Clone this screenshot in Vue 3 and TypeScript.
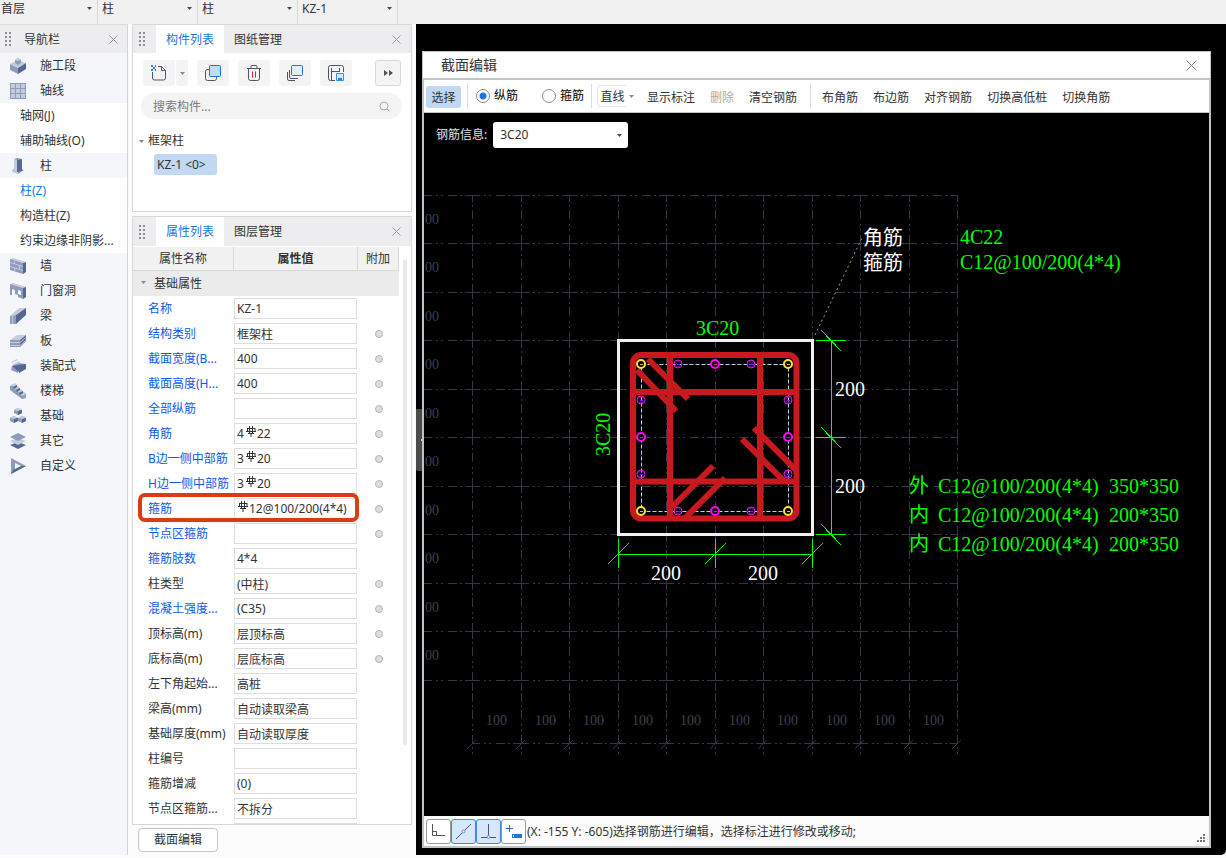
<script setup lang="ts">
import { ref } from 'vue'

type Shape = [points: string, fill: string]
interface NavItem { label: string; icon?: Shape[]; active?: boolean }
interface Prop {
  id: string
  label: string
  value: string
  key?: boolean
  extra?: boolean
  rebar?: boolean
  count?: string
  marked?: boolean
}

const L = '#c3ccdc'
const M = '#8e9cba'
const D = '#566890'

const nav: NavItem[] = [
  { label: '施工段', icon: [['0,6 8,2 16,5 8,10', L], ['0,6 8,10 8,16 0,12', M], ['8,10 16,5 16,11 8,16', D], ['5,2 8,0 11,2 11,5 8,7 5,5', M], ['5,2 8,0 11,2 8,3', L]] },
  { label: '轴线', icon: [['0,0 16,0 16,16 0,16', M], ['1,1 5,1 5,5 1,5', L], ['6,1 10,1 10,5 6,5', L], ['11,1 15,1 15,5 11,5', L], ['1,6 5,6 5,10 1,10', L], ['6,6 10,6 10,10 6,10', L], ['11,6 15,6 15,10 11,10', L], ['1,11 5,11 5,15 1,15', L], ['6,11 10,11 10,15 6,15', L], ['11,11 15,11 15,15 11,15', L]] },
  { label: '轴网(J)' },
  { label: '辅助轴线(O)' },
  { label: '柱', icon: [['2,12 8,10 14,12 8,16', M], ['2,12 8,14 8,16 2,14', L], ['4,1 8,0 8,14 4,13', L], ['7,1 12,1 12,13 7,14', D], ['4,1 7,0 12,1 8,2', M]] },
  { label: '柱(Z)', active: true },
  { label: '构造柱(Z)' },
  { label: '约束边缘非阴影...' },
  { label: '墙', icon: [['0,1 3,0 16,4 13,5', L], ['0,1 13,5 13,16 0,12', M], ['13,5 16,4 16,14 13,16', D], ['0,4 13,8 13,9 0,5', L], ['0,8 13,12 13,13 0,9', L], ['4,3 5,3 5,6 4,6', L], ['9,8 10,8 10,11 9,11', L], ['4,10 5,10 5,13 4,13', L]] },
  { label: '门窗洞', icon: [['0,1 3,0 16,4 13,5', L], ['0,1 13,5 13,16 8,14 8,12 5,11 5,7 2,6 2,12 0,12', M], ['13,5 16,4 16,14 13,16', D], ['8,7 11,8 11,12 8,11', '#f4f6f9']] },
  { label: '梁', icon: [['0,8 9,0 16,0 6,7', L], ['0,8 6,7 6,16 0,16', M], ['6,7 16,0 16,7 6,16', D], ['2,8 3,8 3,16 2,16', L]] },
  { label: '板', icon: [['0,7 7,2 16,2 10,7', L], ['0,7 10,7 10,14 0,14', M], ['10,7 16,2 16,8 10,14', D], ['0,9 10,9 16,4 16,5 10,10 0,10', L], ['0,12 10,12 16,7 16,8 10,13 0,13', L]] },
  { label: '装配式', icon: [['1,4 7,1 8,2 2,5', L], ['2,7 9,3 10,4 3,8', L], ['2,8 9,5 16,6 9,11', M], ['2,8 9,11 8,15 1,12', M], ['9,11 16,6 16,11 9,15', D], ['2,8 16,6 14,11 9,14', D]] },
  { label: '楼梯', icon: [['0,3 4,1 16,11 16,15 12,16 0,7', M], ['1,2 5,0 7,2 3,4', L], ['4,5 8,3 10,5 6,7', L], ['7,8 11,6 13,8 9,10', L], ['10,11 14,9 16,11 12,13', L], ['3,4 7,2 7,4 4,6', D], ['6,7 10,5 10,7 7,9', D], ['9,10 13,8 13,10 10,12', D]] },
  { label: '基础', icon: [['8,0 12,2 12,5 8,7 4,5 4,2', M], ['8,0 12,2 8,3 4,2', L], ['8,3 12,2 12,5 8,7', D], ['4,8 8,10 8,13 4,15 0,13 0,10', M], ['4,8 8,10 4,11 0,10', L], ['4,11 8,10 8,13 4,15', D], ['12,8 16,10 16,13 12,15 8,13 8,10', M], ['12,8 16,10 12,11 8,10', L], ['12,11 16,10 16,13 12,15', D]] },
  { label: '其它', icon: [['0,12 8,9 16,12 8,16', D], ['0,8 8,5 16,8 8,12', L], ['0,4 8,0 16,4 8,8', M]] },
  { label: '自定义', icon: [['1,0 16,8 1,16', M], ['1,16 4,11 11,8 16,8', D], ['5,5 11,8 5,11', '#f4f6f9']] }
]

const props: Prop[] = [
  { id: 'name', label: '名称', value: 'KZ-1', key: true },
  { id: 'kind', label: '结构类别', value: '框架柱', key: true, extra: true },
  { id: 'width', label: '截面宽度(B...', value: '400', key: true, extra: true },
  { id: 'height', label: '截面高度(H...', value: '400', key: true, extra: true },
  { id: 'all', label: '全部纵筋', value: '', key: true, extra: true },
  { id: 'corner', label: '角筋', value: '22', key: true, extra: true, rebar: true, count: '4' },
  { id: 'bside', label: 'B边一侧中部筋', value: '20', key: true, extra: true, rebar: true, count: '3' },
  { id: 'hside', label: 'H边一侧中部筋', value: '20', key: true, extra: true, rebar: true, count: '3' },
  { id: 'stirrup', label: '箍筋', value: '12@100/200(4*4)', key: true, extra: true, rebar: true, marked: true },
  { id: 'node', label: '节点区箍筋', value: '', key: true, extra: true },
  { id: 'legs', label: '箍筋肢数', value: '4*4', key: true },
  { id: 'type', label: '柱类型', value: '(中柱)', extra: true },
  { id: 'grade', label: '混凝土强度...', value: '(C35)', key: true, extra: true },
  { id: 'top', label: '顶标高(m)', value: '层顶标高', extra: true },
  { id: 'bottom', label: '底标高(m)', value: '层底标高', extra: true },
  { id: 'lower', label: '左下角起始...', value: '高桩' },
  { id: 'beam', label: '梁高(mm)', value: '自动读取梁高' },
  { id: 'base', label: '基础厚度(mm)', value: '自动读取厚度' },
  { id: 'no', label: '柱编号', value: '' },
  { id: 'delta', label: '箍筋增减', value: '(0)' },
  { id: 'split', label: '节点区箍筋...', value: '不拆分' },
  { id: 'more', label: '', value: '' }
]

const selectors = ['首层', '柱', '柱', 'KZ-1']
const barMode = ref('long')

// Axis positions of the drawing grid
const gx = [472, 521, 569, 618, 666, 715, 763, 812, 860, 909, 957]
const gy = [195, 243, 292, 340, 389, 437, 486, 534, 583, 631, 680]

const rows = gy
  .map(y => 'M424 ' + (y + 0.5) + 'H472' + gx.slice(0, -1).map((x, i) => `M${x} ${y + 0.5}H${gx[i + 1]}`).join(''))
  .join('')
const cols = gx
  .map(x => `M${x + 0.5} 743V680` + gy.slice(1).map((y, i) => `M${x + 0.5} ${y}V${gy[i]}`).join(''))
  .join('')
const base = gx.slice(0, -1).map((x, i) => `M${x} 743.5H${gx[i + 1]}`).join('')
const tails = gx.map(x => `M${x + 0.5} 747V754`).join('')
const ticks = gx.map(x => `M${x - 5} 749L${x + 4} 740`).join('')

const corners = [[641, 364], [788, 364], [641, 511], [788, 511]]
const middles = [[715, 364], [715, 511], [641, 437], [788, 437]]
const sides = [[678, 364], [751, 364], [641, 400], [641, 474], [788, 400], [788, 474], [678, 511], [751, 511]]

const stirrups = [
  { y: 493, place: '外', size: '350*350' },
  { y: 522, place: '内', size: '200*350' },
  { y: 551, place: '内', size: '200*350' }
]
</script>

<template>
  <div class="app">
    <header class="topbar">
      <div v-for="(s, i) in selectors" :key="i" class="pick">
        <select :aria-label="'选择 ' + (i + 1)"><option>{{ s }}</option></select>
        <svg class="caret" width="5" height="3"><path d="M0 0h5L2.500 3z" /></svg>
      </div>
    </header>

    <div class="main">
      <nav class="nav">
        <div class="head">
          <svg class="grip" width="8" height="14"><path d="M0 0h2v2H0zM4 0h2v2H4zM0 4h2v2H0zM4 4h2v2H4zM0 8h2v2H0zM4 8h2v2H4zM0 12h2v2H0zM4 12h2v2H4z" /></svg>
          <span class="navtitle">导航栏</span>
          <button class="close" aria-label="关闭"><svg width="9" height="9"><path d="M.5.5l8 8M8.500.5l-8 8" /></svg></button>
        </div>
        <a v-for="n in nav" :key="n.label" href="#" class="navrow" :class="{ sub: !n.icon, on: n.active }">
          <svg v-if="n.icon" width="16" height="16"><polygon v-for="(p, i) in n.icon" :key="i" :points="p[0]" :fill="p[1]" /></svg>
          <span>{{ n.label }}</span>
        </a>
      </nav>

      <div class="side">
        <section class="panel list">
          <div class="head">
            <svg class="grip" width="8" height="14"><path d="M0 0h2v2H0zM4 0h2v2H4zM0 4h2v2H0zM4 4h2v2H4zM0 8h2v2H0zM4 8h2v2H4zM0 12h2v2H0zM4 12h2v2H4z" /></svg>
            <button class="tab on">构件列表</button>
            <button class="tab">图纸管理</button>
            <button class="close" aria-label="关闭"><svg width="9" height="9"><path d="M.5.5l8 8M8.500.5l-8 8" /></svg></button>
          </div>
          <div class="tools">
            <div class="split">
              <button class="tool" aria-label="新建">
                <svg width="18" height="18" fill="none" stroke="#4d5566"><path d="M2.500 8v6q0 2 2 2h9q2 0 2-2V6.500l-4-4H8M11.500 2.500v4h4" /><path d="M1 2h2M5 2h1M3 4h2M1 6h2M5 6h1" stroke="#2f80e4" stroke-width="2" /></svg>
              </button>
              <button class="tool drop" aria-label="新建选项"><svg class="caret soft" width="5" height="3"><path d="M0 0h5L2.500 3z" /></svg></button>
            </div>
            <button class="tool" aria-label="复制">
              <svg width="16" height="16" fill="none"><rect x=".5" y="4.500" width="11" height="11" rx="2" stroke="#4d5566" /><rect x="4.500" y=".5" width="11" height="11" rx="1" fill="#c8daf3" stroke="#1f74e0" /></svg>
            </button>
            <button class="tool" aria-label="删除">
              <svg width="16" height="16" fill="none" stroke="#4d5566"><path d="M1 3.500h14M5 3.500V1.500q0-1 1-1h4q1 0 1 1v2M2.500 3.500v10q0 2 2 2h7q2 0 2-2v-10" /><path d="M6.500 6.500v6M9.500 6.500v6" stroke="#e02a2a" /></svg>
            </button>
            <button class="tool" aria-label="层间复制">
              <svg width="16" height="16" fill="none" stroke="#4d5566"><path d="M.5 7v7q0 1.500 1.500 1.500h6M2.500 5v7q0 1.500 1.500 1.500h7" /><rect x="4.500" y=".5" width="11" height="10" rx="1" fill="#e3eefb" stroke="#1f74e0" /></svg>
            </button>
            <button class="tool" aria-label="存档">
              <svg width="16" height="16" fill="none" stroke="#4d5566"><path d="M7 15.500H2.500q-2 0-2-2v-11q0-2 2-2h11q2 0 2 2V7M3.500 3v12M3.500 6.500h8M11.500 3v4" /><path d="M8.500 8.500h7v7h-7z" fill="#d7e6fa" stroke="#3c8ae8" /><path d="M10 13h4v2h-4z" fill="#2f80e4" stroke="none" /></svg>
            </button>
            <button class="tool more" aria-label="更多"><svg width="9" height="6"><path d="M0 0l4 3-4 3zM5 0l4 3-4 3z" fill="#4b4f58" /></svg></button>
          </div>
          <div class="search">
            <input type="search" placeholder="搜索构件..." aria-label="搜索构件">
            <svg width="11" height="11" fill="none" stroke="#a9a9ab"><circle cx="5" cy="5" r="4" /><path d="M8 8l2.500 2.500" /></svg>
          </div>
          <div class="tree">
            <div class="branch"><svg class="caret soft" width="5" height="3"><path d="M0 0h5L2.500 3z" /></svg>框架柱</div>
            <button class="leaf">KZ-1 &lt;0&gt;</button>
          </div>
        </section>

        <section class="panel attrs">
          <div class="head">
            <svg class="grip" width="8" height="14"><path d="M0 0h2v2H0zM4 0h2v2H4zM0 4h2v2H0zM4 4h2v2H4zM0 8h2v2H0zM4 8h2v2H4zM0 12h2v2H0zM4 12h2v2H4z" /></svg>
            <button class="tab on">属性列表</button>
            <button class="tab">图层管理</button>
            <button class="close" aria-label="关闭"><svg width="9" height="9"><path d="M.5.5l8 8M8.500.5l-8 8" /></svg></button>
          </div>
          <div class="scroller">
            <div class="tablebox">
              <table>
                <colgroup><col class="c1"><col><col class="c3"></colgroup>
                <thead><tr><th>属性名称</th><th class="strong">属性值</th><th>附加</th></tr></thead>
                <tbody>
                  <tr class="group"><td colspan="3"><svg class="caret soft" width="5" height="3"><path d="M0 0h5L2.500 3z" /></svg>基础属性</td></tr>
                  <tr v-for="p in props" :key="p.id">
                    <td class="name" :class="{ key: p.key, marked: p.marked }"><label :for="p.id">{{ p.label }}</label></td>
                    <td>
                      <div class="field">
                        <input v-if="p.count" class="count" :value="p.count" :aria-label="p.label + '根数'">
                        <svg v-if="p.rebar" class="rebar" width="10" height="11" fill="none" stroke="#333"><path d="M3.500 0v8M6.500 0v8M1.500 2v4M9 2v4M1.500 2.500h7.500M0 5.500h10M2 7.500h6M5 8v3" /></svg>
                        <input :id="p.id" :value="p.value" :aria-label="p.label || '更多'">
                      </div>
                    </td>
                    <td class="extra"><input v-if="p.extra" type="checkbox" :aria-label="p.label + '附加'"></td>
                  </tr>
                </tbody>
              </table>
            </div>
            <div class="bar"></div>
          </div>
        </section>
        <button class="edit">截面编辑</button>
      </div>

      <main class="stage">
        <div class="handle"></div>
        <section class="dialog">
          <div class="title">
            <h1>截面编辑</h1>
            <button class="close" aria-label="关闭"><svg width="11" height="11"><path d="M.5.5l10 10M10.500.5l-10 10" /></svg></button>
          </div>
          <div class="body">
            <div class="toolbar">
              <button class="choose">选择</button>
              <i class="sep"></i>
              <label class="radio first"><input v-model="barMode" type="radio" name="bar" value="long">纵筋</label>
              <label class="radio"><input v-model="barMode" type="radio" name="bar" value="stirrup">箍筋</label>
              <i class="sep"></i>
              <button class="line">直线</button>
              <button class="linedrop" aria-label="线型"><svg class="caret soft" width="5" height="3"><path d="M0 0h5L2.500 3z" /></svg></button>
              <button class="cmd">显示标注</button>
              <button class="cmd" disabled>删除</button>
              <button class="cmd">清空钢筋</button>
              <i class="sep"></i>
              <button class="cmd">布角筋</button>
              <button class="cmd">布边筋</button>
              <button class="cmd">对齐钢筋</button>
              <button class="cmd">切换高低桩</button>
              <button class="cmd">切换角筋</button>
            </div>

            <div class="canvas">
              <svg class="cad" width="100%" height="100%">
                <g transform="translate(-424 -113)" fill="none">
                  <g class="grid">
                    <path :d="rows + cols + base" stroke-dasharray="8 4 2 3 2 5 9 3 2 3 9 2" />
                    <path :d="tails" stroke-dasharray="2 3" />
                    <path :d="ticks" />
                  </g>
                  <g class="scale">
                    <text v-for="y in gy.slice(0, -1)" :key="y" x="425" :y="y + 29">00</text>
                    <text v-for="x in gx.slice(0, -1)" :key="x" :x="x + 14" y="725">100</text>
                  </g>
                  <path d="M815 335L862 238" stroke="#9a9a9a" stroke-dasharray="2 3" />
                  <rect x="641.500" y="364.500" width="147" height="147" stroke="#b9d4f2" stroke-dasharray="4 2" />
                  <rect x="618.500" y="340.500" width="194" height="194" stroke="#f0f0f0" stroke-width="3" />
                  <g stroke="#c8191f" stroke-width="6">
                    <rect x="633" y="355" width="163.500" height="163.500" rx="8" />
                    <path d="M670 358V516M760 358V516M635 392H794M635 481.500H794" />
                    <path d="M637 370L676 411M648 359L688 399M754 428L796 470M742 439L784 481M672 507L713 466M685 518L725 478" />
                  </g>
                  <g v-for="(c, i) in corners" :key="'c' + i">
                    <circle :cx="c[0]" :cy="c[1]" r="4" fill="#000" stroke="#ffe135" stroke-width="2" />
                    <path :d="`M${c[0] - 1} ${c[1] + 0.5}h3`" stroke="#e8b020" />
                  </g>
                  <g v-for="(c, i) in middles" :key="'m' + i">
                    <circle :cx="c[0]" :cy="c[1]" r="4" fill="#000" stroke="#f0f" stroke-width="2" />
                    <path :d="`M${c[0] - 1} ${c[1] + 0.5}h3`" stroke="#f02080" />
                  </g>
                  <g v-for="(c, i) in sides" :key="'s' + i">
                    <circle :cx="c[0]" :cy="c[1]" r="4" stroke="#e616f0" />
                    <path :d="`M${c[0] - 2} ${c[1] - 1.5}l2 -2l2 2M${c[0] - 2} ${c[1] + 1.5}l2 2l2 -2`" stroke="#c814d2" />
                    <path :d="`M${c[0] - 1} ${c[1] + 0.5}h3`" stroke="#5a28ff" />
                  </g>
                  <g stroke="#0f0" shape-rendering="crispEdges">
                    <path d="M831.500 340V534M816 340.500H846M816 437.500H846M816 534.500H846M618 554.500H812M618.500 539V568M715.500 539V568M812.500 539V568" />
                    <path d="M821 330L841 351M821 427L841 448M821 524L841 545M608 564L629 543M705 564L726 543M802 564L823 543" />
                  </g>
                  <g class="note white">
                    <text x="835" y="396">200</text>
                    <text x="835" y="493">200</text>
                    <text x="651" y="580">200</text>
                    <text x="748" y="580">200</text>
                    <text x="863" y="245">角筋</text>
                    <text x="863" y="270">箍筋</text>
                  </g>
                  <g class="note">
                    <text x="696" y="335">3C20</text>
                    <text transform="translate(610 456) rotate(-90)">3C20</text>
                    <text x="960" y="244">4C22</text>
                    <text x="960" y="269">C12@100/200(4*4)</text>
                    <g v-for="s in stirrups" :key="s.y">
                      <text x="909" :y="s.y">{{ s.place }}</text>
                      <text x="938" :y="s.y">C12@100/200(4*4)</text>
                      <text x="1109" :y="s.y">{{ s.size }}</text>
                    </g>
                  </g>
                </g>
              </svg>
              <div class="info">
                <label for="info">钢筋信息:</label>
                <div class="combo">
                  <select id="info"><option>3C20</option></select>
                  <svg class="caret" width="5" height="3"><path d="M0 0h5L2.500 3z" /></svg>
                </div>
              </div>
            </div>

            <footer class="status">
              <button aria-label="正交"><svg width="15" height="14" fill="none" stroke="#4d5566"><path d="M1.500 0v11.500H14M1.500 7.500h4v4" /></svg></button>
              <button class="on" aria-label="中点"><svg width="15" height="15" fill="none" stroke="#4d5566"><path d="M0 15L15 0" /><circle cx="7.500" cy="7.500" r="1.500" fill="#d7e6fa" stroke="#5b9aec" /></svg></button>
              <button class="on" aria-label="垂足"><svg width="15" height="15" fill="none" stroke="#4d5566"><path d="M7.500 0v13M0 13.500h15" /><circle cx="7.500" cy="13" r="1.500" fill="#d7e6fa" stroke="#5b9aec" /></svg></button>
              <button aria-label="动态输入"><svg width="16" height="13" fill="none" stroke="#1f74e0"><path d="M0 3.500h7M3.500 0v7" /><path d="M6 9h10v4H6z" fill="#1f74e0" stroke="none" /><path d="M7 10h1v2H7z" fill="#fff" stroke="none" /></svg></button>
              <span>(X: -155 Y: -605)选择钢筋进行编辑，选择标注进行修改或移动;</span>
              <svg class="resize" width="8" height="8"><path d="M6 0h2v2H6zM3 3h2v2H3zM6 3h2v2H6zM0 6h2v2H0zM3 6h2v2H3zM6 6h2v2H6z" fill="#777" /></svg>
            </footer>
          </div>
        </section>
      </main>
    </div>
  </div>
</template>

<style>
body { margin: 0; }
</style>

<style scoped>
*, *::after { box-sizing: border-box; }
.app {
  display: flex;
  flex-direction: column;
  height: 100vh;
  padding-bottom: 3px;
  overflow: hidden;
  background: #fcfcfc;
  color: #333;
  font: 12px/18px "Noto Sans", "Noto Sans CJK SC", sans-serif;
}
button, input, select { font: inherit; color: inherit; margin: 0; padding: 0; border: 0; background: none; outline: none; }
button { white-space: nowrap; }
select { appearance: none; width: 100%; height: 18px; }
.caret { fill: #454a55; flex: none; display: block; }
.caret.soft { fill: #8a8a8a; }

.topbar { display: flex; flex: none; height: 24px; background: #f1f1f1; }
.pick { display: flex; align-items: flex-start; width: 100px; padding: 0 5px 0 4px; border-right: 1px solid #d9d9d9; }
.pick:first-child { width: 98px; padding-left: 1px; }
.pick .caret { margin-top: 7px; }

.main { display: flex; flex: 1; min-height: 0; }
.nav { flex: none; width: 128px; border-top: 1px solid #dcdcde; border-right: 1px solid #d2d5d8; background: #f4f6f9; }
.head { display: flex; align-items: center; height: 28px; background: #ededf0; }
.grip { flex: none; fill: #8b8b90; margin-left: 5px; }
.navtitle { margin-left: 11px; padding-top: 1px; }
.close { display: flex; margin-left: auto; stroke: #9a9a9e; padding: 0 9px; }
.close svg { fill: none; }
.navrow { display: flex; align-items: center; height: 25px; padding-left: 10px; color: inherit; text-decoration: none; }
.navrow svg { flex: none; margin-right: 14px; }
.navrow.sub { background: #fff; padding-left: 20px; }
.navrow.on { color: #0a7df0; }

.side { display: flex; flex-direction: column; flex: none; width: 280px; margin: 0 4px; }
.panel { border: 1px solid #d8d8da; background: #fff; }
.list { flex: none; height: 188px; }
.attrs { display: flex; flex-direction: column; flex: 1; min-height: 0; margin-top: 4px; }
.attrs .head { flex: none; height: 30px; border-bottom: 1px solid #fff; }
.tab { align-self: stretch; width: 68px; padding-top: 1px; }
.side .grip { margin: 0 9px 0 6px; }
.tab.on { background: #fff; color: #1677e6; }
.side .close { padding-right: 10px; }

.tools { display: flex; gap: 9px; padding: 7px 10px; }
.tool { display: flex; align-items: center; justify-content: center; width: 32px; height: 26px; border-radius: 3px; background: #f4f4f5; }
.split { display: flex; gap: 1px; }
.drop { width: 12px; }
.tool.more { width: 26px; margin-left: auto; border: 1px solid #d8d8da; }
.search { display: flex; align-items: center; height: 26px; margin: 0 9px 0 8px; padding: 1px 12px 0; border-radius: 13px; background: #f4f4f5; }
.search input { flex: 1; min-width: 0; appearance: none; }
.search input::placeholder { color: #7a7a7c; opacity: 1; }
.tree { padding: 12px 9px; }
.branch { display: flex; align-items: center; gap: 4px; height: 20px; margin-bottom: 3px; }
.branch .caret { margin-left: -3px; }
.leaf { height: 21px; margin-left: 12px; padding: 0 4px 0 3px; min-width: 63px; text-align: left; border-radius: 3px; background: #c0d8f1; }

.scroller { display: flex; flex: 1; min-height: 0; overflow: hidden; }
.tablebox { flex: 1; min-width: 0; }
table { width: 100%; table-layout: fixed; border-collapse: separate; border-spacing: 0; }
.c1 { width: 101px; }
.c3 { width: 41px; }
th { height: 24px; padding: 1px 0 0; font-weight: 400; background: #f1f1f1; border-right: 1px solid #d8d8da; border-bottom: 1px solid #d8d8da; }
th.strong { font-weight: 600; }
td { height: 25px; padding: 0; }
.group td { background: #ebebeb; padding-left: 21px; }
.group .caret { float: left; margin: 6px 0 0 -13px; }
.name { padding-left: 15px; white-space: nowrap; }
.key { color: #1059f0; }
.field { display: flex; align-items: center; height: 21px; margin-right: 1px; padding: 0 2px; border: 1px solid #dedede; background: #fff; }
.field input { flex: 1; min-width: 0; width: 0; height: 19px; }
.field .count { flex: none; width: 8px; }
.rebar { flex: none; margin: 0 1px 4px; }
.extra { text-align: center; }
.extra input { appearance: none; display: block; width: 8px; height: 8px; margin: 0 auto; border: 1px solid #b5b5b7; border-radius: 4px; background: #dedee0; }
.marked { position: relative; }
.marked::after { content: ""; position: absolute; left: 5px; top: -3px; width: 221px; height: 29px; border: 4px solid #dc3c14; border-radius: 7px; pointer-events: none; }
.bar { flex: none; width: 4px; height: 486px; margin: 12px 4px 0; border-radius: 2px; background: #e9e9ea; }
.edit { flex: none; width: 80px; height: 24px; margin: 3px 0 3px 6px; border: 1px solid #c6c6c8; border-radius: 4px; background: #fff; }

.stage { position: relative; display: flex; flex: 1; min-width: 0; padding: 27px 15px 7px 6px; background: #000; border-bottom-right-radius: 5px; }
.handle { position: absolute; left: 0; top: 385px; width: 6px; height: 62px; background: #4b4b4b; border-radius: 0 0 0 2px; }
.handle::after { content: ""; position: absolute; right: 0; top: 30px; width: 1px; height: 2px; background: #ccc; }
.dialog { display: flex; flex-direction: column; flex: 1; min-width: 0; border: 1px solid #c0c3c8; background: #fff; }
.title { display: flex; align-items: center; flex: none; height: 26px; padding-left: 18px; }
h1 { margin: 0; font-size: 14px; font-weight: 400; }
.title .close { padding-right: 13px; stroke: #808080; }
.body { display: flex; flex-direction: column; flex: 1; min-height: 0; border: solid #c0c3c8; border-width: 2px 1px 1px; }
.toolbar { display: flex; align-items: center; flex: none; height: 33px; padding: 2px 2px 0; border-bottom: 1px solid #c0c3c8; white-space: nowrap; overflow: hidden; }
.choose { width: 35px; height: 22px; margin-right: 1px; padding-top: 2px; border-radius: 3px; background: #c0d8f1; }
.sep { flex: none; width: 1px; height: 24px; margin: 0 4px 2px 5px; background: #dcdcde; }
.radio { display: flex; align-items: center; gap: 4px; padding-bottom: 2px; margin-right: 2px; color: #000; }
.radio.first { margin: 0 24px 0 4px; }
.radio input { appearance: none; width: 14px; height: 14px; border: 1px solid #8a8a8a; border-radius: 50%; background: #fff; }
.radio input:checked { background: radial-gradient(circle, #1f74e0 3px, #fff 4px); }
.line { width: 30px; height: 22px; margin: 0 0 2px 1px; padding-top: 2px; border: solid #e8e8ea; border-width: 1px 0 1px 1px; border-radius: 4px 0 0 4px; }
.linedrop { display: flex; align-items: center; width: 13px; height: 22px; padding-left: 2px; margin-bottom: 2px; }
.cmd { height: 22px; padding: 2px 7px 0; margin-right: 1px; }
.cmd:disabled { color: #aaa; }

.canvas { position: relative; flex: 1; min-height: 0; background: #000; overflow: hidden; }
.cad { position: absolute; inset: 0; }
.grid { stroke: #303846; shape-rendering: crispEdges; }
.scale { fill: #3a414e; font: 14px "Liberation Serif", serif; }
.note { fill: #0f0; font: 20px "Liberation Serif", "Noto Sans CJK SC", serif; }
.note.white { fill: #fff; }
.info { position: relative; display: flex; align-items: center; gap: 6px; padding: 9px 12px; color: #e0e0e0; }
.combo { display: flex; align-items: center; width: 135px; height: 26px; padding: 0 6px 0 7px; border-radius: 3px; background: #fff; color: #333; }

.status { display: flex; align-items: center; flex: none; height: 30px; padding: 0 4px 0 2px; background: #fcfcfc; }
.status button { display: flex; align-items: center; justify-content: center; width: 25px; height: 25px; border: 1px solid #999; border-radius: 3px; background: #fff; }
.status button.on { border-color: #3c8ae8; background: #d7e6fa; }
.status span { margin-left: 1px; padding-top: 1px; white-space: nowrap; }
.resize { margin-left: auto; align-self: flex-end; margin-bottom: 4px; }
</style>
